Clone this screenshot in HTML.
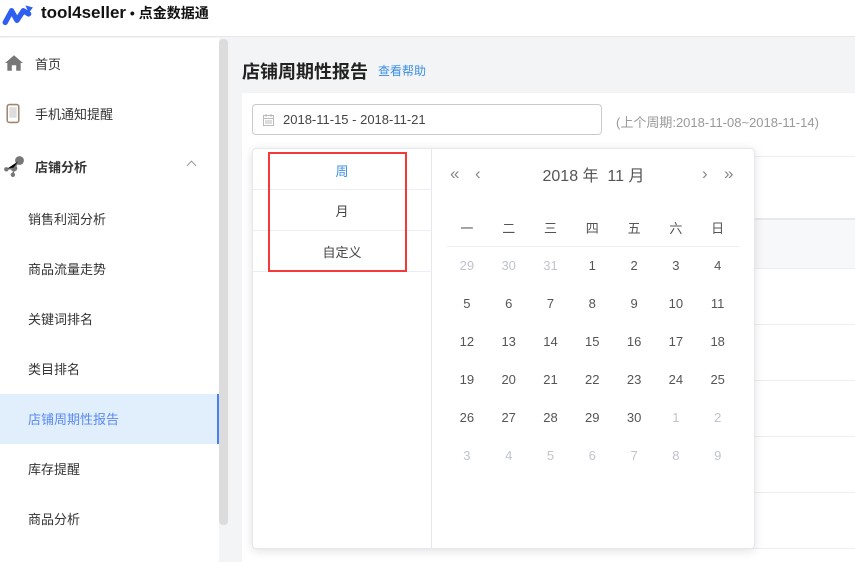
<!DOCTYPE html>
<html><head><meta charset="utf-8"><style>
*{margin:0;padding:0;box-sizing:border-box}
body{width:855px;height:562px;overflow:hidden;background:#f3f4f6;font-family:"Liberation Sans","Noto Sans CJK SC",sans-serif;position:relative;color:#333}
.a{position:absolute}
.hdr{left:0;top:0;width:855px;height:37px;background:#fff;border-bottom:1px solid #e8e8ec}
.side{left:0;top:38px;width:219px;height:524px;background:#fff}
.si{position:absolute;left:28px;font-size:13px;color:#333}
.cal td{width:41.8px;text-align:center;font-size:13px;color:#555;height:38px}
.cal td.g{color:#c0c4cc}
.tl{position:absolute;left:432px;width:423px;height:1px;background:#ebeef5}
</style></head><body>
<div class="a hdr">
 <svg class="a" style="left:2px;top:3px" width="32" height="24" viewBox="0 0 30 22"><path d="M3 18 L9 7 L14 16 L20 7 L25 10" stroke="#2f5ff0" stroke-width="5" fill="none" stroke-linecap="round" stroke-linejoin="round"/><path d="M22 2 L29 4 L25 9 Z" fill="#2f5ff0"/></svg>
 <div class="a" style="left:41px;top:3px;font-size:17px;font-weight:bold;color:#111">tool4seller<span style="font-size:14px"> • 点金数据通</span></div>
</div>
<div class="a side">
 <svg class="a" style="left:4px;top:16px" width="20" height="18" viewBox="0 0 18 16"><path d="M9 1 L1 8 H3 V15 H7 V10 H11 V15 H15 V8 H17 Z" fill="#777"/></svg>
 <div class="si" style="left:35px;top:16px">首页</div>
 <svg class="a" style="left:5px;top:65px" width="16" height="21" viewBox="0 0 14 20"><rect x="1.5" y="1.5" width="11" height="17" rx="2" fill="none" stroke="#a08870" stroke-width="1.5"/><rect x="3.5" y="4" width="7" height="10" fill="#ddd"/></svg>
 <div class="si" style="left:35px;top:66px">手机通知提醒</div>
 <svg class="a" style="left:3px;top:117px" width="22" height="22" viewBox="0 0 20 20"><circle cx="15" cy="5" r="4" fill="#777"/><circle cx="10" cy="12" r="3" fill="#777"/><circle cx="3" cy="13" r="2" fill="#777"/><circle cx="9" cy="18" r="2" fill="#777"/><path d="M3 13 L10 12 L15 5 M10 12 L9 18" stroke="#777" stroke-width="1.3"/></svg>
 <div class="si" style="left:35px;top:119px;font-weight:bold">店铺分析</div>
 <div class="a" style="left:188px;top:124px;width:7px;height:7px;border-left:1px solid #999;border-top:1px solid #999;transform:rotate(45deg)"></div>
 <div class="si" style="top:171px">销售利润分析</div>
 <div class="si" style="top:221px">商品流量走势</div>
 <div class="si" style="top:271px">关键词排名</div>
 <div class="si" style="top:321px">类目排名</div>
 <div class="a" style="left:0;top:356px;width:219px;height:50px;background:#e1eefb;border-right:2px solid #4a80f5"></div>
 <div class="si" style="top:371px;color:#5b8af0">店铺周期性报告</div>
 <div class="si" style="top:421px">库存提醒</div>
 <div class="si" style="top:471px">商品分析</div>
</div>
<div class="a" style="left:219px;top:39px;width:9px;height:486px;background:#dcdcdc;border-radius:4px"></div>
<div class="a" style="left:242px;top:58px;font-size:18px;font-weight:bold;color:#222">店铺周期性报告</div>
<div class="a" style="left:378px;top:62px;font-size:12px;color:#3a8ee6">查看帮助</div>
<div class="a" style="left:242px;top:93px;width:613px;height:469px;background:#fff"></div>
<div class="a" style="left:252px;top:104px;width:350px;height:31px;border:1px solid #c8cad0;border-radius:4px;background:#fff"></div>
<svg class="a" style="left:263px;top:114px" width="11" height="12" viewBox="0 0 11 12"><rect x="0.5" y="1.5" width="10" height="10" fill="none" stroke="#bbb"/><path d="M0.5 4.5H10.5M3 0V3M8 0V3M2 7H9M2 9H9" stroke="#bbb"/></svg>
<div class="a" style="left:283px;top:112px;font-size:13px;color:#444">2018-11-15 - 2018-11-21</div>
<div class="a" style="left:616px;top:112px;font-size:13px;color:#999">(上个周期:2018-11-08~2018-11-14)</div>
<div class="tl" style="top:156px"></div>
<div class="a" style="left:432px;top:218px;width:423px;height:50px;background:#f7f8fa;border-top:2px solid #e6e8ee"></div>
<div class="tl" style="top:268px"></div><div class="tl" style="top:324px"></div><div class="tl" style="top:380px"></div><div class="tl" style="top:436px"></div><div class="tl" style="top:492px"></div><div class="tl" style="top:548px"></div>
<div class="a" style="left:252px;top:148px;width:503px;height:401px;background:#fff;border:1px solid #e4e7ed;border-radius:4px;box-shadow:0 2px 10px rgba(0,0,0,.12)"></div>
<div class="a" style="left:252px;top:148px;width:180px;height:401px;border-right:1px solid #e4e7ed"></div>
<div class="a" style="left:253px;top:189px;width:179px;height:1px;background:#ebeef5"></div>
<div class="a" style="left:253px;top:230px;width:179px;height:1px;background:#ebeef5"></div>
<div class="a" style="left:253px;top:271px;width:179px;height:1px;background:#ebeef5"></div>
<div class="a" style="left:252px;top:161px;width:180px;text-align:center;font-size:13px;color:#3a8ee6">周</div>
<div class="a" style="left:252px;top:201px;width:180px;text-align:center;font-size:13px;color:#444">月</div>
<div class="a" style="left:252px;top:242px;width:180px;text-align:center;font-size:13px;color:#444">自定义</div>
<div class="a" style="left:268px;top:152px;width:139px;height:120px;border:2px solid #f53838"></div>
<div class="a" style="left:450px;top:164px;font-size:17px;color:#888">«</div>
<div class="a" style="left:475px;top:164px;font-size:17px;color:#888">‹</div>
<div class="a" style="left:702px;top:164px;font-size:17px;color:#888">›</div>
<div class="a" style="left:724px;top:164px;font-size:17px;color:#888">»</div>
<div class="a" style="left:432px;top:162px;width:323px;text-align:center;font-size:16px;color:#555">2018 年&nbsp; 11 月</div>
<table class="a cal" style="left:446px;top:208px;border-collapse:collapse">
<tr><td>一</td><td>二</td><td>三</td><td>四</td><td>五</td><td>六</td><td>日</td></tr>
<tr><td class="g">29</td><td class="g">30</td><td class="g">31</td><td>1</td><td>2</td><td>3</td><td>4</td></tr>
<tr><td>5</td><td>6</td><td>7</td><td>8</td><td>9</td><td>10</td><td>11</td></tr>
<tr><td>12</td><td>13</td><td>14</td><td>15</td><td>16</td><td>17</td><td>18</td></tr>
<tr><td>19</td><td>20</td><td>21</td><td>22</td><td>23</td><td>24</td><td>25</td></tr>
<tr><td>26</td><td>27</td><td>28</td><td>29</td><td>30</td><td class="g">1</td><td class="g">2</td></tr>
<tr><td class="g">3</td><td class="g">4</td><td class="g">5</td><td class="g">6</td><td class="g">7</td><td class="g">8</td><td class="g">9</td></tr>
</table>
<div class="a" style="left:447px;top:246px;width:292px;height:1px;background:#ebeef5"></div>
</body></html>
